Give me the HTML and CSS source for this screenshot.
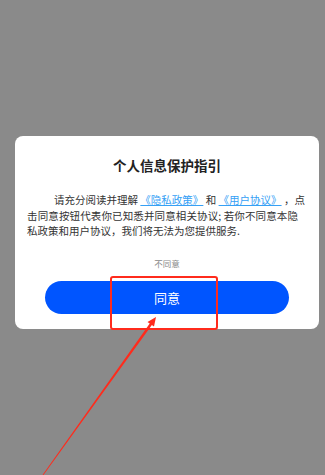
FILE: index.html
```html
<!DOCTYPE html>
<html lang="zh-CN">
<head>
<meta charset="utf-8">
<title>个人信息保护指引</title>
<link rel="stylesheet" href="styles.css">
</head>
<body>
<div class="screen">
  <div class="card">
    <h1 class="title">个人信息保护指引</h1>
    <div class="text">
      <span class="line first">请充分阅读并理解 <a class="link">《隐私政策》</a> 和 <a class="link">《用户协议》</a> ，点</span>
      <span class="line">击同意按钮代表你已知悉并同意相关协议; 若你不同意本隐</span>
      <span class="line last">私政策和用户协议，我们将无法为您提供服务.</span>
    </div>
    <div class="decline">不同意</div>
    <div class="agree">同意</div>
  </div>
  <svg class="annot" width="325" height="475" viewBox="0 0 325 475">
    <rect x="111" y="277" width="106" height="52" rx="2" fill="none" stroke="#ff2b1c" stroke-width="2"/>
    <polygon fill="#ff2b1c" points="42.67,474.77 149.74,323.54 147.5,322.0 156,317 154.0,326.6 151.86,325.06 43.33,475.23"/>
  </svg>
</div>
</body>
</html>
```
FILE: styles.css
```css
html, body {
  margin: 0;
  padding: 0;
  background: #8a8a8a;
}
.screen {
  position: relative;
  width: 325px;
  height: 475px;
  overflow: hidden;
  padding-top: 136px;
  box-sizing: border-box;
  font-family: "Noto Sans CJK SC", "Noto Sans", sans-serif;
}
.card {
  margin-left: 15px;
  width: 304px;
  background: #ffffff;
  border-radius: 8px;
  padding: 21px 0 15px;
  box-sizing: border-box;
  display: flex;
  flex-direction: column;
  align-items: center;
}
.title {
  margin: 0;
  font-size: 13.5px;
  line-height: 16px;
  font-weight: 600;
  color: #222;
}
.text {
  margin: 19px 0 0;
  align-self: stretch;
  padding: 0 21px 0 12px;
  font-size: 10.5px;
  line-height: 15.5px;
  color: #333;
}
.line {
  display: block;
  white-space: nowrap;
  text-align: justify;
  text-align-last: justify;
}
.line.first {
  padding-left: 27px;
  padding-right: 3px;
}
.line.last {
  text-align-last: left;
}
.link {
  color: #35a0f5;
  text-decoration: underline;
}
.decline {
  margin-top: 18px;
  font-size: 8.5px;
  line-height: 12px;
  color: #888;
}
.agree {
  margin-top: 12px;
  width: 244px;
  height: 33px;
  border-radius: 17px;
  background: #0055ff;
  color: #fff;
  font-size: 13px;
  display: flex;
  align-items: center;
  justify-content: center;
}
.annot {
  position: absolute;
  left: 0;
  top: 0;
  pointer-events: none;
}
```
